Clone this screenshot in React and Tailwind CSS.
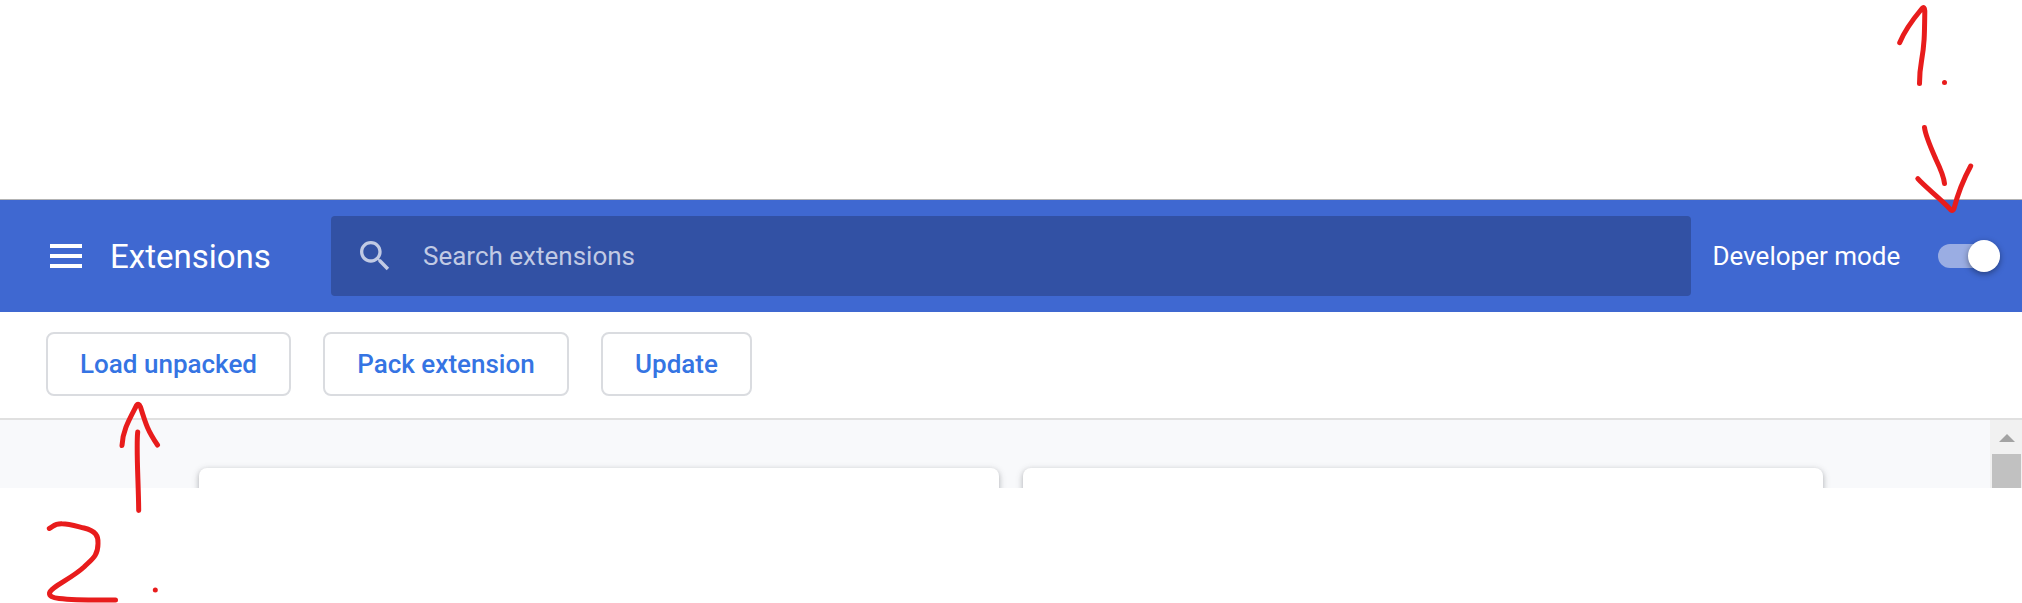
const buttons = [
  { label: 'Load unpacked', width: 'w-[245px]' },
  { label: 'Pack extension', width: 'w-[246px]' },
  { label: 'Update', width: 'w-[151px]' },
];

function Header() {
  return (
    <header className="flex h-[113px] shrink-0 items-center border-t border-[#b3b3b3] bg-[#3f68d1] text-white">
      <button aria-label="Main menu" className="ml-[50px] flex w-8 flex-col gap-1.5">
        <span className="h-1 bg-white" />
        <span className="h-1 bg-white" />
        <span className="h-1 bg-white" />
      </button>
      <h1 className="ml-7 w-[221px] pt-0.5 text-[33px] leading-[48px] whitespace-nowrap">Extensions</h1>
      <div className="flex h-20 w-[1360px] items-center rounded bg-[#3251a4] pl-6 text-[#c1cae4]">
        <svg viewBox="0 0 24 24" className="size-10 fill-current">
          <path d="M15.5 14h-.79l-.28-.27C15.41 12.59 16 11.11 16 9.5 16 5.91 13.09 3 9.5 3S3 5.91 3 9.5 5.91 16 9.5 16c1.61 0 3.09-.59 4.23-1.57l.27.28v.79l5 4.99L20.49 19l-4.99-5zm-6 0C7.01 14 5 11.99 5 9.5S7.01 5 9.5 5 14 7.01 14 9.5 11.99 14 9.5 14z" />
        </svg>
        <span className="ml-7 text-[26px]">Search extensions</span>
      </div>
      <span className="ml-[21.5px] w-[225.5px] text-[26px] whitespace-nowrap">Developer mode</span>
      <div role="switch" aria-checked="true" className="flex h-6 w-[62px] items-center justify-end rounded-full bg-[#9aade3]">
        <span className="size-8 shrink-0 rounded-full bg-white shadow-[0_2px_6px_rgba(0,0,0,0.4)]" />
      </div>
    </header>
  );
}

function Toolbar() {
  return (
    <div className="flex h-[108px] shrink-0 gap-8 border-b-2 border-[#e0e0e0] pt-5 pl-[46px]">
      {buttons.map(({ label, width }) => (
        <button
          key={label}
          className={`${width} h-16 rounded-lg border-2 border-[#dadce0] text-[26px] font-medium whitespace-nowrap text-[#3574e3]`}
        >
          {label}
        </button>
      ))}
    </div>
  );
}

function Content() {
  const card =
    'h-[120px] w-[800px] shrink-0 rounded-lg bg-white shadow-[0_2px_4px_rgba(60,64,67,0.25),0_2px_6px_2px_rgba(60,64,67,0.13)]';
  return (
    <main className="flex h-[68px] shrink-0 overflow-hidden bg-[#f8f9fb]">
      <div className="flex h-[68px] w-[1990px] gap-6 overflow-hidden pt-12 pl-[199px]">
        <div className={card} />
        <div className={card} />
      </div>
      <div className="flex w-8 flex-col items-center bg-[#f1f1f1] pt-3.5">
        <svg viewBox="0 0 16 8" className="ml-0.5 h-2 w-4 shrink-0 fill-[#a3a3a3]">
          <path d="M0 8 8 0l8 8z" />
        </svg>
        <div className="mt-3 ml-px h-[34px] w-[29px] shrink-0 bg-[#c1c1c1]" />
      </div>
    </main>
  );
}

function Annotations() {
  return (
    <svg
      viewBox="0 0 2022 603"
      className="pointer-events-none absolute inset-0 h-[603px] w-[2022px] fill-none stroke-[#e81c1c] stroke-[5]"
      strokeLinecap="round"
      strokeLinejoin="round"
    >
      <path d="M1899.7 42.7C1903.5 33 1912 20.500 1922 8.500Q1924.500 6 1924.800 11C1924.500 35 1924.500 44 1921.500 61C1919.500 72 1919.500 76 1919.500 83.500" />
      <path d="M1924.500 127.500C1925.500 136 1931 148 1936 159.500C1941.500 171 1944 178 1944.500 183.500" />
      <path d="M1917.800 178.700C1925 187 1940 198 1951 210Q1953 211.500 1954 208.500C1958 193 1962 182 1970.700 166" />
      <path d="M122 445.500C122.500 431 129 420 136.500 405.500Q138.500 402.500 140.500 407C146 425 148 431 157.500 445" />
      <path d="M137.700 432C136 448 138.500 483 138.700 510.500" />
      <path d="M49.300 528.500C54 526 54 523.500 62 523.700C69 523.700 76 526 84 528C96 531 98.500 536 98 543.500C98 556 92 559 84 567C71 579 51 587 49.500 593Q49 597.500 59 598.500C77 600.500 99 600 115.500 600" />
      <circle cx="1944.500" cy="82.500" r="2.500" className="fill-[#e81c1c] stroke-none" />
      <circle cx="155.300" cy="590" r="2.500" className="fill-[#e81c1c] stroke-none" />
    </svg>
  );
}

export default function App() {
  return (
    <div className="relative flex h-[603px] w-[2022px] flex-col overflow-hidden bg-white pt-[199px] font-[Roboto,sans-serif]">
      <Header />
      <Toolbar />
      <Content />
      <Annotations />
    </div>
  );
}
